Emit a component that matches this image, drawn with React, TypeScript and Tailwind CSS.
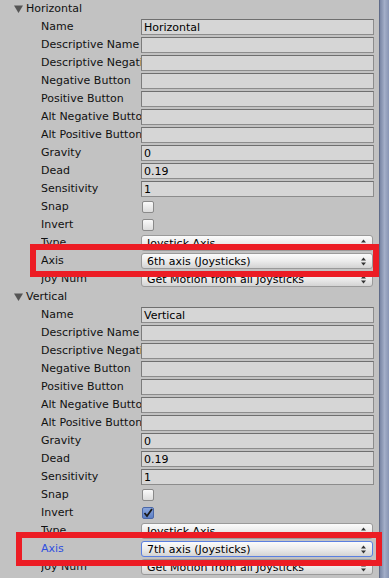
import React from "react";

type Row =
  | { kind: "text"; label: string; value?: string }
  | { kind: "check"; label: string; checked?: boolean }
  | { kind: "popup"; label: string; value: string; focused?: boolean };

const Arrows = () => (
  <svg width="5" height="9" viewBox="0 0 5 9" className="shrink-0">
    <path d="M2.5 0.5 L5 3.5 L0 3.5 Z" fill="#333" />
    <path d="M0 5.5 L5 5.5 L2.5 8.5 Z" fill="#333" />
  </svg>
);

function Field({ row }: { row: Row }) {
  if (row.kind === "text") {
    return (
      <div className="w-[233px] h-[16px] bg-[#d6d6d6] border border-[#8c8c8c] border-t-[#6f6f6f] border-l-[#7c7c7c] flex items-center pl-[2px] text-black leading-none overflow-hidden whitespace-nowrap">
        {row.value}
      </div>
    );
  }
  if (row.kind === "check") {
    return (
      <div className="w-[233px] h-[16px] flex items-center">
        {row.checked ? (
          <div className="ml-[1px] w-[12px] h-[12px] rounded-[2px] border border-[#4a67a8] bg-gradient-to-b from-[#8aa6dc] to-[#5d7fc4] flex items-center justify-center">
            <svg width="10" height="10" viewBox="0 0 10 10">
              <path d="M1.5 5 L4 8 L9 1" stroke="#1a1a1a" strokeWidth="1.8" fill="none" />
            </svg>
          </div>
        ) : (
          <div className="ml-[1px] w-[12px] h-[12px] rounded-[2px] border border-[#8a8a8a] bg-gradient-to-b from-[#fafafa] to-[#dcdcdc]" />
        )}
      </div>
    );
  }
  return (
    <div
      className={
        "w-[232px] h-[16px] rounded-[3px] border flex items-center pl-[5px] pr-[6px] text-black leading-none whitespace-nowrap overflow-hidden bg-gradient-to-b from-[#fbfbfb] via-[#ececec] to-[#d3d3d3] " +
        (row.focused ? "border-[#5a7fe0]" : "border-[#9a9a9a]")
      }
    >
      <span className="flex-1 overflow-hidden">{row.value}</span>
      <Arrows />
    </div>
  );
}

function Section({ title, rows, blueAxis }: { title: string; rows: Row[]; blueAxis?: boolean }) {
  return (
    <div className="flex flex-col">
      <div className="h-[18px] flex items-center pl-[14px]">
        <svg width="9" height="8" viewBox="0 0 9 8" className="mr-[3px]">
          <path d="M0 0.5 L9 0.5 L4.5 8 Z" fill="#555" />
        </svg>
        <span className="text-[#111]">{title}</span>
      </div>
      {rows.map((r, i) => (
        <div key={i} className="h-[18px] flex items-center">
          <div
            className={
              "w-[100px] ml-[41px] overflow-hidden whitespace-nowrap " +
              (blueAxis && r.label === "Axis" ? "text-[#2f4fe0]" : "text-[#111]")
            }
          >
            {r.label}
          </div>
          <Field row={r} />
        </div>
      ))}
    </div>
  );
}

const makeRows = (name: string, axis: string, invert: boolean, focused: boolean): Row[] => [
  { kind: "text", label: "Name", value: name },
  { kind: "text", label: "Descriptive Name" },
  { kind: "text", label: "Descriptive Negative Name" },
  { kind: "text", label: "Negative Button" },
  { kind: "text", label: "Positive Button" },
  { kind: "text", label: "Alt Negative Button" },
  { kind: "text", label: "Alt Positive Button" },
  { kind: "text", label: "Gravity", value: "0" },
  { kind: "text", label: "Dead", value: "0.19" },
  { kind: "text", label: "Sensitivity", value: "1" },
  { kind: "check", label: "Snap" },
  { kind: "check", label: "Invert", checked: invert },
  { kind: "popup", label: "Type", value: "Joystick Axis" },
  { kind: "popup", label: "Axis", value: axis, focused },
  { kind: "popup", label: "Joy Num", value: "Get Motion from all Joysticks" },
];

export default function App() {
  return (
    <div
      className="relative w-[389px] h-[578px] overflow-hidden bg-[#c2c2c2] flex text-[11px]"
      style={{ fontFamily: '"DejaVu Sans", Verdana, sans-serif' }}
    >
      <div className="w-[379px] flex flex-col">
        <Section title="Horizontal" rows={makeRows("Horizontal", "6th axis (Joysticks)", false, false)} />
        <Section title="Vertical" rows={makeRows("Vertical", "7th axis (Joysticks)", true, true)} blueAxis />
      </div>
      <div className="w-[10px] h-full border-l border-[#5f6b88] bg-gradient-to-r from-[#7a87a5] via-[#a3aec8] to-[#8895b3]" />
      <div className="absolute left-[30px] top-[244px] w-[349px] h-[33px] border-[6px] border-[#ec1c24]" />
      <div className="absolute left-[16px] top-[532px] w-[366px] h-[34px] border-[6px] border-[#ec1c24]" />
    </div>
  );
}
